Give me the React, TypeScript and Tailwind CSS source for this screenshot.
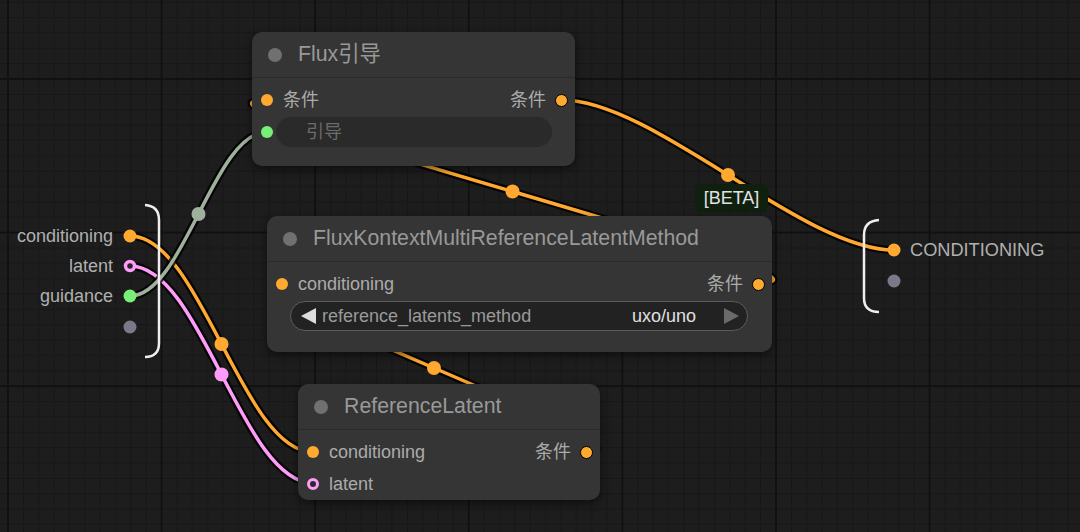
import React from 'react';

type Pt = { x: number; y: number };

const ORANGE = '#ffa931';
const PINK = '#ff9cf9';
const SAGE = '#9fb09c';

// litegraph style spline: control points pushed out horizontally by a quarter of the distance
const spline = (a: Pt, b: Pt) => {
  const d = Math.hypot(b.x - a.x, b.y - a.y) * 0.25;
  const c1 = { x: a.x + d, y: a.y };
  const c2 = { x: b.x - d, y: b.y };
  const mid = {
    x: (a.x + 3 * c1.x + 3 * c2.x + b.x) / 8,
    y: (a.y + 3 * c1.y + 3 * c2.y + b.y) / 8,
  };
  return { d: `M${a.x},${a.y} C${c1.x},${c1.y} ${c2.x},${c2.y} ${b.x},${b.y}`, mid };
};

const links: { from: Pt; to: Pt; color: string }[] = [
  { from: { x: 758, y: 283 }, to: { x: 267, y: 100 }, color: ORANGE },
  { from: { x: 586, y: 452 }, to: { x: 282, y: 284 }, color: ORANGE },
  { from: { x: 562, y: 100 }, to: { x: 894, y: 250 }, color: ORANGE },
  { from: { x: 130, y: 236 }, to: { x: 313, y: 452 }, color: ORANGE },
  { from: { x: 130, y: 266 }, to: { x: 313, y: 483 }, color: PINK },
  { from: { x: 130, y: 296 }, to: { x: 267, y: 132 }, color: SAGE },
];

const Canvas: React.FC = () => {
  const minor = Array.from({ length: 10 }, (_, i) => i * 15.36);
  return (
    <svg className="absolute inset-0" width={1080} height={532}>
      <defs>
        <pattern id="grid" patternUnits="userSpaceOnUse" x={7} y={78} width={153.6} height={153.6}>
          {minor.map(p => (
            <React.Fragment key={p}>
              <rect x={p + 0.5} y={0} width={1} height={153.6} fill="#161616" />
              <rect x={0} y={p + 0.5} width={153.6} height={1} fill="#161616" />
            </React.Fragment>
          ))}
          <rect x={0} y={0} width={2} height={153.6} fill="#111111" />
          <rect x={0} y={0} width={153.6} height={2} fill="#111111" />
        </pattern>
      </defs>
      <rect width={1080} height={532} fill="#1d1d1d" />
      <rect width={1080} height={532} fill="url(#grid)" />

      {links.map((l, i) => {
        const s = spline(l.from, l.to);
        return (
          <g key={i}>
            <path d={s.d} fill="none" stroke="#000" strokeOpacity={0.8} strokeWidth={8} />
            <path d={s.d} fill="none" stroke={l.color} strokeWidth={3.5} />
            <circle cx={s.mid.x} cy={s.mid.y} r={7} fill={l.color} />
          </g>
        );
      })}

      {/* group input */}
      <path d="M145,205 Q159,206 159,220 L159,343 Q159,357 145,357" fill="none" stroke="#eeeeee" strokeWidth={2.5} />
      <circle cx={130} cy={236} r={6.5} fill={ORANGE} />
      <circle cx={130} cy={266} r={4.5} fill="#262626" stroke={PINK} strokeWidth={3.5} />
      <circle cx={130} cy={296} r={6.5} fill="#78f078" />
      <circle cx={130} cy={327} r={6.5} fill="#7b7989" />

      {/* group output */}
      <path d="M879,220 Q864,221 864,235 L864,298 Q864,312 879,312" fill="none" stroke="#eeeeee" strokeWidth={2.5} />
      <circle cx={894} cy={250} r={6.5} fill={ORANGE} />
      <circle cx={894} cy={281} r={6.5} fill="#7b7989" />
    </svg>
  );
};

const InDot = ({ color }: { color: string }) => (
  <span className="w-3 h-3 rounded-full shrink-0" style={{ backgroundColor: color }} />
);

const OutDot = () => (
  <span className="w-[13px] h-[13px] rounded-full shrink-0 bg-[#ffa931] border-[1.5px] border-black" />
);

const NodeHeader = ({ title }: { title: string }) => (
  <div className="h-[46px] flex items-center pl-4 border-b border-[#2a2a2a]">
    <span className="w-[14px] h-[14px] rounded-full bg-[#707070]" />
    <span className="ml-4 text-[21.3px] text-[#999999] leading-none whitespace-nowrap">{title}</span>
  </div>
);

const SlotRow = ({ label, dot, output }: { label: string; dot: React.ReactNode; output?: string }) => (
  <div className="flex h-8 items-center pl-[9px] pr-[7px]">
    {dot}
    <span className="ml-[10px] text-[18px] text-[#ababab] leading-none">{label}</span>
    {output && (
      <>
        <span className="ml-auto mr-[9px] text-[18px] text-[#ababab] leading-none">{output}</span>
        <OutDot />
      </>
    )}
  </div>
);

const LatentRing = () => (
  <span className="w-3 h-3 rounded-full shrink-0 border-[3.5px] border-[#ff9cf9] bg-[#2a2a2a]" />
);

export default function App() {
  return (
    <div className="relative w-[1080px] h-[532px] overflow-hidden bg-[#1d1d1d] font-['Liberation_Sans','Noto_Sans_CJK_SC',sans-serif]">
      <Canvas />

      {/* Flux guidance node */}
      <div className="absolute left-[252px] top-[32px] w-[323px] h-[134px] rounded-[10px] bg-[#353535] shadow-[0_3px_8px_rgba(0,0,0,0.5)]">
        <NodeHeader title="Flux引导" />
        <div className="pt-[6px]">
          <SlotRow label="条件" dot={<InDot color={ORANGE} />} output="条件" />
          <div className="flex h-8 items-center pl-[9px] pr-[23px]">
            <InDot color="#78f078" />
            <div className="ml-[3px] flex-1 h-[30px] rounded-full bg-[#2a2a2a] flex items-center pl-[30px]">
              <span className="text-[18px] text-[#6c6c6c] leading-none">引导</span>
            </div>
          </div>
        </div>
      </div>

      {/* beta badge */}
      <div className="absolute left-[695px] top-[184px] w-[73px] h-[28px] rounded-[6px] bg-[#10200f] flex items-center justify-center text-[18px] text-[#e2e2e2] leading-none">
        [BETA]
      </div>

      {/* FluxKontextMultiReferenceLatentMethod */}
      <div className="absolute left-[267px] top-[216px] w-[505px] h-[136px] rounded-[10px] bg-[#353535] shadow-[0_3px_8px_rgba(0,0,0,0.5)]">
        <NodeHeader title="FluxKontextMultiReferenceLatentMethod" />
        <div className="pt-[6px]">
          <SlotRow label="conditioning" dot={<InDot color={ORANGE} />} output="条件" />
          <div className="flex h-8 items-center pl-[23px] pr-[24px]">
            <div className="flex-1 h-[30px] rounded-full border border-[#5c5c5c] bg-[#222222] flex items-center pl-[10px] pr-[8px]">
              <svg width={15} height={16} viewBox="0 0 15 16">
                <polygon points="15,0 15,16 0,8" fill="#dddddd" />
              </svg>
              <span className="ml-[6px] text-[18px] text-[#9a9a9a] leading-none">reference_latents_method</span>
              <span className="ml-auto text-[18px] text-[#e0e0e0] leading-none">uxo/uno</span>
              <svg className="ml-[28px]" width={15} height={16} viewBox="0 0 15 16">
                <polygon points="0,0 0,16 15,8" fill="#6a6a6a" />
              </svg>
            </div>
          </div>
        </div>
      </div>

      {/* ReferenceLatent */}
      <div className="absolute left-[298px] top-[384px] w-[302px] h-[116px] rounded-[10px] bg-[#353535] shadow-[0_3px_8px_rgba(0,0,0,0.5)]">
        <NodeHeader title="ReferenceLatent" />
        <div className="pt-[6px]">
          <SlotRow label="conditioning" dot={<InDot color={ORANGE} />} output="条件" />
          <SlotRow label="latent" dot={<LatentRing />} />
        </div>
      </div>

      {/* group input labels */}
      <div className="absolute left-0 top-[221px] w-[113px] flex flex-col items-end text-[18px] text-[#b0b0b0] leading-none">
        <div className="h-[30px] flex items-center">conditioning</div>
        <div className="h-[30px] flex items-center">latent</div>
        <div className="h-[30px] flex items-center">guidance</div>
      </div>

      {/* group output label */}
      <div className="absolute left-[910px] top-[235px] h-[30px] flex items-center text-[18.2px] text-[#b0b0b0] leading-none">
        CONDITIONING
      </div>
    </div>
  );
}
